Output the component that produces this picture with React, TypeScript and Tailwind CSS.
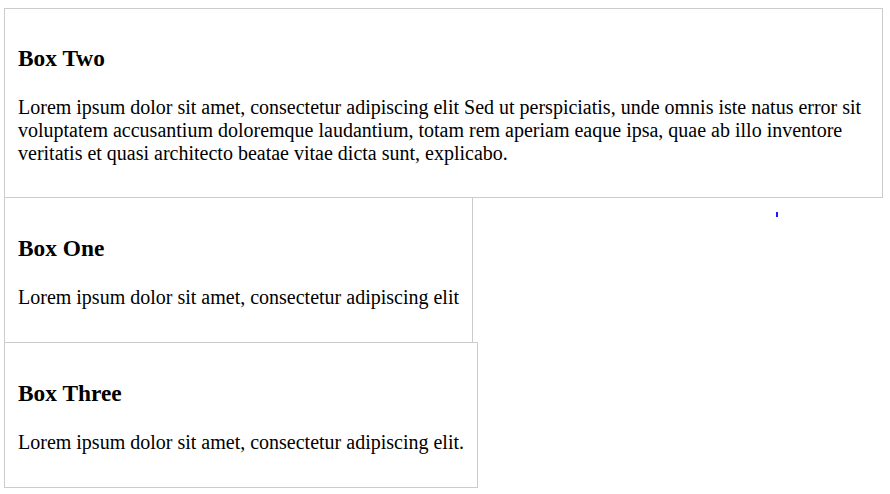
import React from "react";

const font = { fontFamily: '"Liberation Serif", "Times New Roman", serif' };

function Box({ title, text, cls }: { title: string; text: string; cls: string }) {
  return (
    <div className={"border border-[#cccccc] px-[13px] pb-[13px] text-[20px] text-black bg-white " + cls}>
      <h3 className="text-[23.4px] font-bold leading-[1.15] my-[23.4px]">{title}</h3>
      <p className="leading-[1.15] my-[20px]">{text}</p>
    </div>
  );
}

export default function App() {
  return (
    <div className="relative w-[890px] h-[494px] bg-white pl-[4px] pt-[8px]" style={font}>
      <Box
        cls="w-[879px] h-[190px] pt-[13px]"
        title="Box Two"
        text="Lorem ipsum dolor sit amet, consectetur adipiscing elit Sed ut perspiciatis, unde omnis iste natus error sit voluptatem accusantium doloremque laudantium, totam rem aperiam eaque ipsa, quae ab illo inventore veritatis et quasi architecto beatae vitae dicta sunt, explicabo."
      />
      <Box cls="w-fit h-[146px] -mt-px pt-[14px]" title="Box One" text="Lorem ipsum dolor sit amet, consectetur adipiscing elit" />
      <Box cls="w-fit h-[146px] -mt-px pt-[14px]" title="Box Three" text="Lorem ipsum dolor sit amet, consectetur adipiscing elit." />
      <div className="absolute left-[776px] top-[212px] w-[2px] h-[5px] bg-[#1a1aff]" />
    </div>
  );
}
